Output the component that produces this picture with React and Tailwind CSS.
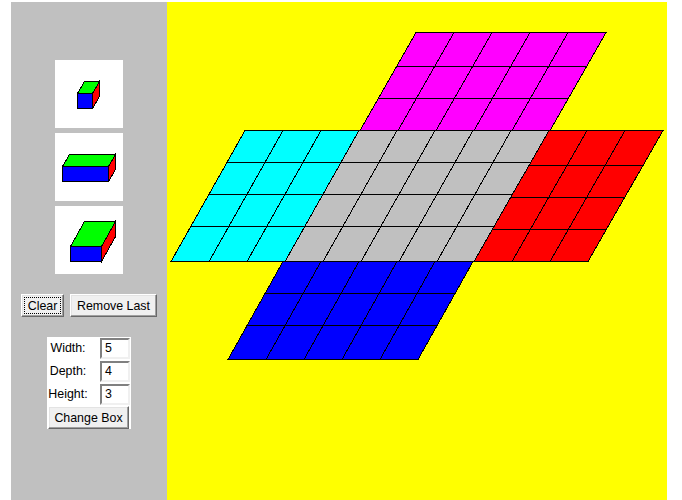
const lerp = (a, b, t) => a + (b - a) * t;

function Plane({ fill, top, bottom, yTop, yBottom, rows, cols }) {
  const xLeft = (y) => lerp(top[0], bottom[0], (y - yTop) / (yBottom - yTop));
  const xRight = (y) => lerp(top[1], bottom[1], (y - yTop) / (yBottom - yTop));
  const columnLines = Array.from({ length: cols - 1 }, (_, i) => (i + 1) / cols);
  return (
    <g stroke="#000" strokeWidth="1" shapeRendering="crispEdges">
      <polygon
        fill={fill}
        points={`${top[0]},${yTop} ${top[1]},${yTop} ${bottom[1]},${yBottom} ${bottom[0]},${yBottom}`}
      />
      {rows.map((y) => (
        <line key={y} x1={xLeft(y)} y1={y} x2={xRight(y)} y2={y} />
      ))}
      {columnLines.map((t) => (
        <line
          key={t}
          x1={lerp(top[0], top[1], t)}
          y1={yTop}
          x2={lerp(bottom[0], bottom[1], t)}
          y2={yBottom}
        />
      ))}
    </g>
  );
}

function Thumb({ front, back }) {
  const [fx1, fx2, fy1, fy2] = front;
  const [bx1, bx2, by] = back;
  return (
    <div className="w-[68px] h-[68px] bg-white">
      <svg width="68" height="68" viewBox="0 0 68 68" className="block">
        <g stroke="#000" strokeWidth="1" shapeRendering="crispEdges">
          <polygon fill="#00ff00" points={`${fx1}.5,${fy1}.5 ${fx2}.5,${fy1}.5 ${bx2}.5,${by}.5 ${bx1}.5,${by}.5`} />
          <polygon fill="#ff0000" points={`${fx2}.5,${fy1}.5 ${bx2}.5,${by}.5 ${bx2}.5,${by + fy2 - fy1}.5 ${fx2}.5,${fy2}.5`} />
          <rect x={fx1 + 0.5} y={fy1 + 0.5} width={fx2 - fx1} height={fy2 - fy1} fill="#0000ff" />
        </g>
      </svg>
    </div>
  );
}

const btn =
  "h-[23px] bg-[#f0f0f0] border border-t-white border-l-white border-r-[#696969] border-b-[#696969] shadow-[inset_-1px_-1px_0_#a0a0a0,inset_1px_1px_0_#e3e3e3] text-[12.4px] leading-none text-black flex items-center justify-center";

function Field({ label, value }) {
  return (
    <div className="flex items-center h-[23px]">
      <span className="w-[40px] ml-[1px] text-center text-[12.4px] text-black whitespace-nowrap">{label}</span>
      <span className="ml-[12px] w-[30px] h-[21px] pl-[3px] bg-white border-2 border-t-[#808080] border-l-[#808080] border-r-[#f0f0f0] border-b-[#f0f0f0] text-[12.4px] leading-[16px] text-black">
        {value}
      </span>
    </div>
  );
}

export default function App() {
  return (
    <div className="w-[682px] h-[500px] bg-white pt-[2px] pl-[11px] flex font-['Liberation_Sans',sans-serif]">
      <aside className="w-[156px] h-[498px] bg-[#c0c0c0] flex flex-col items-center pt-[58px]">
        <div className="flex flex-col gap-[5px]">
          <Thumb front={[22, 37, 33, 48]} back={[29, 44, 21]} />
          <Thumb front={[7, 53, 33, 48]} back={[14, 60, 21]} />
          <Thumb front={[15, 46, 40, 55]} back={[29, 60, 15]} />
        </div>
        <div className="flex gap-[6px] mt-[20px]">
          <button className={`${btn} w-[43px] p-[2px]`}>
            <span className="w-full h-full pt-[1px] flex items-center justify-center outline-1 outline-dotted outline-black -outline-offset-1">
              Clear
            </span>
          </button>
          <button className={`${btn} w-[87px] pt-[1px]`}>Remove Last</button>
        </div>
        <div className="mt-[20px] w-[84px] h-[92px] bg-white flex flex-col">
          <Field label="Width:" value="5" />
          <Field label="Depth:" value="4" />
          <Field label="Height:" value="3" />
          <button className={`${btn} w-[81px] ml-[1px] pt-[1px]`}>Change Box</button>
        </div>
      </aside>
      <main className="w-[500px] h-[498px] bg-[#ffff00]">
        <svg width="500" height="498" viewBox="167 2 500 498" className="block">
          <Plane fill="#ff00ff" top={[416, 606]} bottom={[360, 550]} yTop={32.5} yBottom={130.5} rows={[66.5, 98.5]} cols={5} />
          <Plane fill="#00ffff" top={[245, 359]} bottom={[171, 285]} yTop={130.5} yBottom={261.5} rows={[162.5, 194.5, 226.5]} cols={3} />
          <Plane fill="#0000ff" top={[283, 473]} bottom={[228, 418]} yTop={261.5} yBottom={359.5} rows={[293.5, 325.5]} cols={5} />
          <Plane fill="#c0c0c0" top={[359, 549]} bottom={[285, 475]} yTop={130.5} yBottom={261.5} rows={[162.5, 194.5, 226.5]} cols={5} />
          <Plane fill="#ff0000" top={[549, 663]} bottom={[474, 588]} yTop={130.5} yBottom={261.5} rows={[165.5, 197.5, 229.5]} cols={3} />
        </svg>
      </main>
    </div>
  );
}
